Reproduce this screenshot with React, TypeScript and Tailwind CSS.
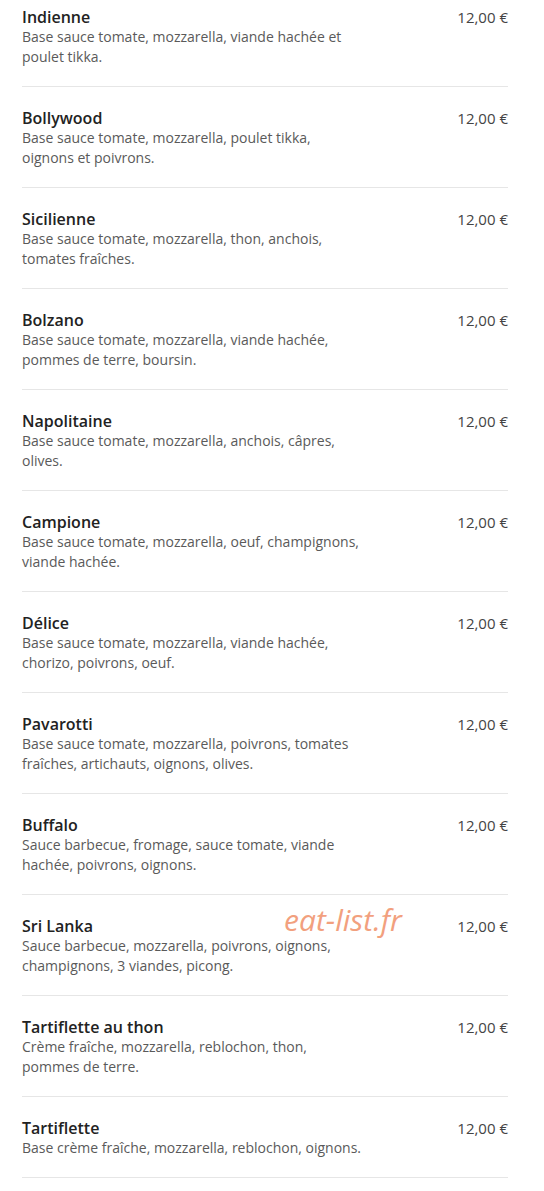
import React from "react";

const items: { name: string; desc: string }[] = [
  { name: "Indienne", desc: "Base sauce tomate, mozzarella, viande hachée et poulet tikka." },
  { name: "Bollywood", desc: "Base sauce tomate, mozzarella, poulet tikka, oignons et poivrons." },
  { name: "Sicilienne", desc: "Base sauce tomate, mozzarella, thon, anchois, tomates fraîches." },
  { name: "Bolzano", desc: "Base sauce tomate, mozzarella, viande hachée, pommes de terre, boursin." },
  { name: "Napolitaine", desc: "Base sauce tomate, mozzarella, anchois, câpres, olives." },
  { name: "Campione", desc: "Base sauce tomate, mozzarella, oeuf, champignons, viande hachée." },
  { name: "Délice", desc: "Base sauce tomate, mozzarella, viande hachée, chorizo, poivrons, oeuf." },
  { name: "Pavarotti", desc: "Base sauce tomate, mozzarella, poivrons, tomates fraîches, artichauts, oignons, olives." },
  { name: "Buffalo", desc: "Sauce barbecue, fromage, sauce tomate, viande hachée, poivrons, oignons." },
  { name: "Sri Lanka", desc: "Sauce barbecue, mozzarella, poivrons, oignons, champignons, 3 viandes, picong." },
  { name: "Tartiflette au thon", desc: "Crème fraîche, mozzarella, reblochon, thon, pommes de terre." },
  { name: "Tartiflette", desc: "Base crème fraîche, mozzarella, reblochon, oignons." },
];

export default function App() {
  return (
    <div
      className="relative w-[544px] bg-white"
      style={{ fontFamily: "'Open Sans', 'Noto Sans', sans-serif" }}
    >
      <div className="px-[22px] mr-[14px] -mt-[14px]">
        {items.map((it) => (
          <div key={it.name} className="flex justify-between border-b border-[#e6e6e6] pt-[21px] pb-[19px]">
            <div className="w-[342px]">
              <div className="text-[16px] leading-[20px] font-semibold text-[#222]">{it.name}</div>
              <div className="text-[14px] leading-[20px] text-[#5a5a5a]">{it.desc}</div>
            </div>
            <div className="text-[15px] leading-[20px] text-[#444]">12,00 €</div>
          </div>
        ))}
      </div>
      <div className="absolute left-[284px] top-[914px] text-[30px] leading-[40px] italic text-[#f2a07e]">
        eat-list.fr
      </div>
    </div>
  );
}
